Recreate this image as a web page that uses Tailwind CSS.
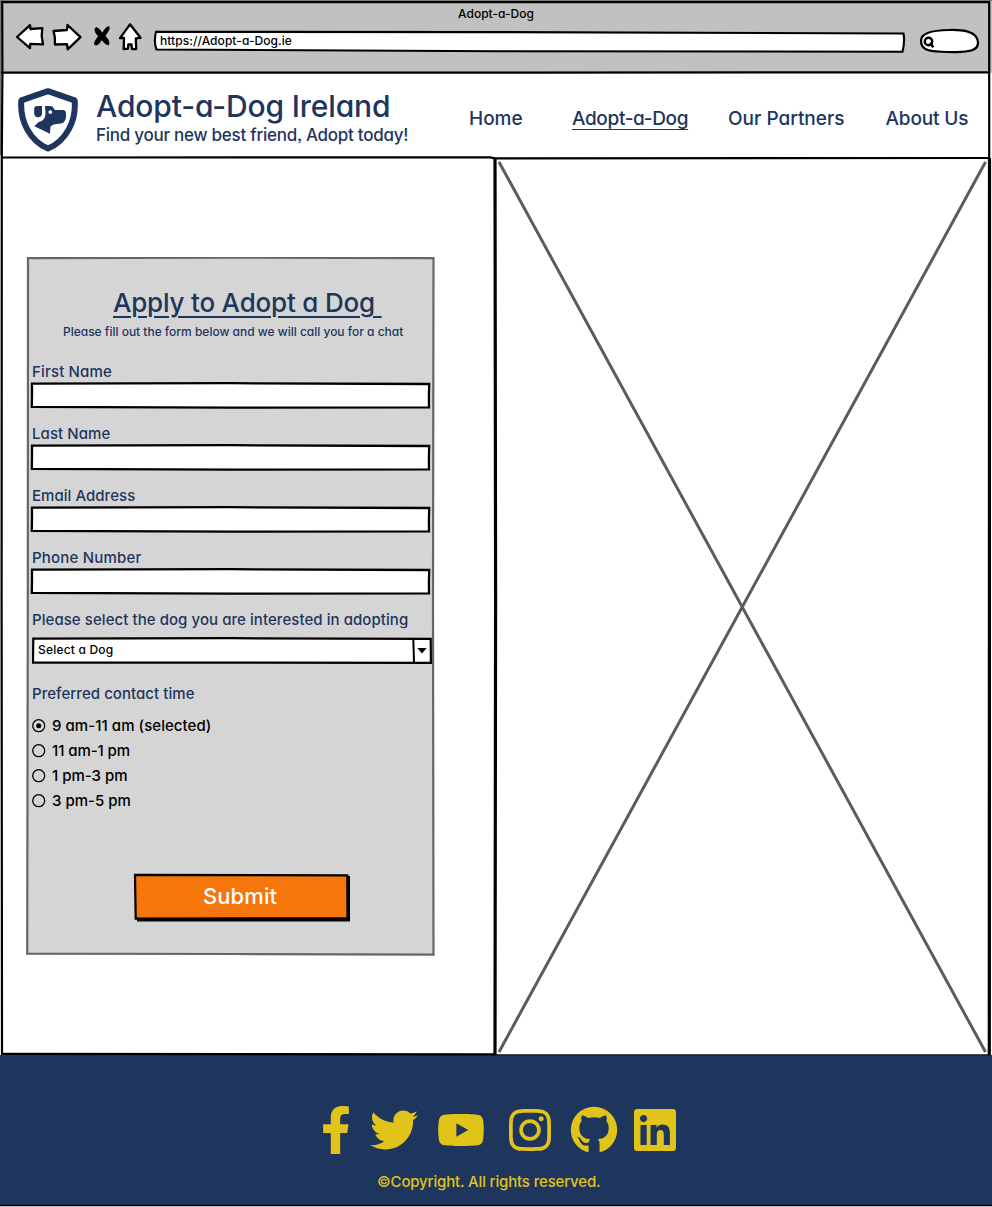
<!DOCTYPE html>
<html lang="en">
<head>
<meta charset="utf-8">
<title>Adopt-a-Dog</title>
<script src="https://cdn.jsdelivr.net/npm/@tailwindcss/browser@4"></script>
</head>
<body class="relative flex h-[1207px] w-[992px] flex-col overflow-hidden bg-white font-['Inter','Liberation_Sans',sans-serif] font-medium text-[#1e355e] [font-feature-settings:'cv11'_1,'ss03'_1] whitespace-nowrap">

<!-- Browser chrome -->
<div class="relative h-[73px] shrink-0 bg-[#c1c1c1] text-black">
  <div class="flex h-[28px] justify-center pl-0 text-[12px] leading-[28px]"><span>Adopt-a-Dog</span></div>
  <div class="flex items-start pl-[14px]">
    <svg class="-mt-[6px] h-[32px] w-[132px] shrink-0" viewBox="14 22 132 32" fill="#fff" stroke="#000" stroke-width="2.3" stroke-linejoin="round">
      <path d="M17 37 30 25.200 30.500 29 42.300 28.200 41.700 36 43 44.300 30.200 43.800 30 48.200Z"/>
      <path d="M53.500 31 67 30 67.500 25 80.500 37.200 67.700 49.300 67 44.200 55 44.500 54.800 37Z"/>
      <path fill="#000" stroke-width="0.800" d="M96 27.500C99 28 101 31 102.300 33.500 103.800 30.500 106 27 109 26.500 110.200 29 107 33 105 36 107.500 38.500 110 41.500 108.500 45 105 44.500 103.500 42 102 39.500 100 42 98.500 45.500 95.500 45 93 44.500 95.500 40 98.500 36 96 34 93.500 29.500 96 27.500Z"/>
      <path d="M130 24.300 120 38.200 124 38 123.700 49.200 128 48.700 128.300 44.500 131.500 44.500 132 49.200 136.200 49 135.800 38.300 140.500 37.800Z"/>
    </svg>
    <div class="relative ml-[7px] mt-[2px] h-[23px] w-[753px]">
      <svg class="absolute inset-0 h-full w-full" viewBox="153 30 753 23"><path d="M156 31.800 500 32.100 903.500 33.500Q905 42 902.500 51.700L500 51.200 156.500 49.500Q153.500 42 156 31.800Z" fill="#fff" stroke="#000" stroke-width="2.100"/></svg>
      <span class="relative block pl-[7px] text-[12px] leading-[22px] tracking-[0.060px]">https://Adopt-a-Dog.ie</span>
    </div>
    <svg class="ml-[12px] h-[26px] w-[62px]" viewBox="918 28 62 26"><path d="M921 41C921 33 931 30.500 949 30 963 29.600 977 31 978 42 979 51 968 51.500 955 52.200 936 51.500 921 53 921 41Z" fill="#fff" stroke="#000" stroke-width="2.200"/><circle cx="928.500" cy="41.500" r="3.700" fill="none" stroke="#000" stroke-width="2.400"/><path d="m930 43 3.300 4.200" stroke="#000" stroke-width="2.600"/></svg>
  </div>
</div>

<!-- Site header -->
<header class="flex h-[85px] shrink-0 items-start pl-[18px]">
  <svg class="mt-[15px] h-[64px] w-[60px] shrink-0" viewBox="18 88 60 64">
    <path d="M48 91.200 74.600 100.300C76.500 121 66 141 48 148.600 30 141 19.500 121 21.400 100.300Z" fill="none" stroke="#1e355e" stroke-width="6" stroke-linejoin="round"/>
    <path fill="#1e355e" d="M36.500 106H42V113.500Q41.800 117.200 38 117.300 34.200 117 34.200 113V108.500Q34.300 106 36.500 106Z"/>
    <path fill="#1e355e" fill-rule="evenodd" d="M45 106H51Q53.500 106.500 54.700 110H63.500Q66 110.500 66 113V117Q65.500 122 62 123.300 60 124 56.500 124 52.500 124.200 50.500 126.500L50 133.700 34.300 126.300 38.700 122Q45.500 120.500 45.500 113.500ZM50.300 110.200A1.900 1.900 0 1 0 50.300 114 1.900 1.900 0 1 0 50.300 110.200Z"/>
  </svg>
  <div class="ml-[18px] w-[373px] shrink-0 pt-[15px]">
    <h1 class="h-[36px] text-[30px] leading-[37px] font-medium tracking-[-0.130px]"><span>Adopt-a-Dog Ireland</span></h1>
    <p class="text-[17px] leading-[22px] tracking-[-0.260px]"><span>Find your new best friend, Adopt today!</span></p>
  </div>
  <nav class="flex pt-[31px] text-[19px] leading-[30px]">
    <a class="w-[103px]"><span>Home</span></a>
    <a class="w-[156px]"><span class="underline decoration-[1px] underline-offset-[4px] tracking-[-0.350px]">Adopt-a-Dog</span></a>
    <a class="w-[157.500px]"><span>Our Partners</span></a>
    <a><span class="tracking-[-0.130px]">About Us</span></a>
  </nav>
</header>

<!-- Form and picture columns -->
<main class="flex h-[897px] shrink-0">
  <section class="w-[495px] shrink-0 pl-[26px] pt-[99px]">
    <form class="relative h-[699px] w-[409px]">
      <svg class="absolute inset-0 h-full w-full" viewBox="26 257 409 699"><path d="M28 258.200 230 257.700 433.500 258.200 433 600 433.500 954.600 230 954 27.200 953.700 27.800 600Z" fill="#d5d5d5" stroke="#666" stroke-width="2.200"/></svg>
      <div class="relative pt-[27px]">
        <h2 class="h-[38px] pl-[87px] text-[26px] leading-[38px] font-medium whitespace-pre tracking-[-0.200px]"><span class="underline decoration-[1.500px] underline-offset-[4px]">Apply to Adopt a Dog </span></h2>
        <p class="h-[20px] pl-[37px] text-[12px] leading-[20px] tracking-[-0.010px]"><span>Please fill out the form below and we will call you for a chat</span></p>
        <div class="pl-[4px] pt-[20px] text-[15px] leading-[20px]">
          <div class="h-[62px]"><label class="block h-[20px] pl-[2px] tracking-[0.160px]"><span>First Name</span></label><svg class="h-[27px] w-[401px]" viewBox="0 0 401 27"><path d="M2 1.700 200 1.200 399.200 2 398.900 14 399 25.300 200 25.700 1.800 24.800 2 13Z" fill="#fff" stroke="#000" stroke-width="2.300"/></svg></div>
          <div class="h-[62px]"><label class="block h-[20px] pl-[2px] tracking-[0.080px]"><span>Last Name</span></label><svg class="h-[27px] w-[401px]" viewBox="0 0 401 27"><path d="M2 1.700 200 1.200 399.200 2 398.900 14 399 25.300 200 25.700 1.800 24.800 2 13Z" fill="#fff" stroke="#000" stroke-width="2.300"/></svg></div>
          <div class="h-[62px]"><label class="block h-[20px] pl-[2px] tracking-[0.040px]"><span>Email Address</span></label><svg class="h-[27px] w-[401px]" viewBox="0 0 401 27"><path d="M2 1.700 200 1.200 399.200 2 398.900 14 399 25.300 200 25.700 1.800 24.800 2 13Z" fill="#fff" stroke="#000" stroke-width="2.300"/></svg></div>
          <div class="h-[62px]"><label class="block h-[20px] pl-[2px] tracking-[0.200px]"><span>Phone Number</span></label><svg class="h-[27px] w-[401px]" viewBox="0 0 401 27"><path d="M2 1.700 200 1.200 399.200 2 398.900 14 399 25.300 200 25.700 1.800 24.800 2 13Z" fill="#fff" stroke="#000" stroke-width="2.300"/></svg></div>
          <div class="h-[74px] pl-[2px]">
            <label class="block h-[27px] tracking-[0.060px]"><span>Please select the dog you are interested in adopting</span></label>
            <div class="relative h-[27px] w-[400px] text-black">
              <svg class="absolute inset-0 h-full w-full" viewBox="32 637 400 27"><path d="M33.300 638.600 230 638.200 430.700 638.900 430.900 662.800 230 662.600 33 662.700Z" fill="#fff" stroke="#000" stroke-width="2.200"/><path d="M413.300 638.500 414 662.500" stroke="#000" stroke-width="2"/><path d="M417.300 648H426.700L422 653.400Z"/></svg>
              <span class="relative block pl-[6px] text-[12px] leading-[26px] tracking-[0.200px]">Select a Dog</span>
            </div>
          </div>
          <p class="h-[29px] pl-[2px] tracking-[0.050px]"><span>Preferred contact time</span></p>
          <div class="flex flex-col pl-[2px] text-black leading-[25px]">
            <label class="flex items-center gap-[6px]"><svg class="h-[14px] w-[14px]" viewBox="0 0 14 14"><circle cx="6.700" cy="6.700" r="6" fill="none" stroke="#000" stroke-width="1.300"/><circle cx="6.700" cy="6.700" r="2.500"/></svg><span class="tracking-[0.050px]">9 am-11 am (selected)</span></label>
            <label class="flex items-center gap-[6px]"><svg class="h-[14px] w-[14px]" viewBox="0 0 14 14"><circle cx="6.700" cy="6.700" r="6" fill="none" stroke="#000" stroke-width="1.300"/></svg><span class="tracking-[-0.080px]">11 am-1 pm</span></label>
            <label class="flex items-center gap-[6px]"><svg class="h-[14px] w-[14px]" viewBox="0 0 14 14"><circle cx="6.700" cy="6.700" r="6" fill="none" stroke="#000" stroke-width="1.300"/></svg><span>1 pm-3 pm</span></label>
            <label class="flex items-center gap-[6px]"><svg class="h-[14px] w-[14px]" viewBox="0 0 14 14"><circle cx="6.700" cy="6.700" r="6" fill="none" stroke="#000" stroke-width="1.300"/></svg><span>3 pm-5 pm</span></label>
          </div>
        </div>
        <button type="button" class="relative ml-[107px] mt-[60px] block h-[49px] w-[218px] text-white">
          <svg class="absolute inset-0 h-full w-full" viewBox="133 873 218 49"><path d="M137 876H350V921.500H137Z"/><path d="M135 874.800 347.300 875.300 347.500 918 135.700 918.700Z" fill="#f6760c" stroke="#000" stroke-width="2.200"/></svg>
          <span class="relative block h-[49px] pr-[4px] text-[22px] leading-[46px] tracking-[0.100px]"><span>Submit</span></span>
        </button>
      </div>
    </form>
  </section>
  <svg class="h-[897px] w-[497px] shrink-0" viewBox="495 158 497 897" fill="none" stroke="#5c5c5c" stroke-width="3"><path d="M499 162 985.500 1052M985.500 162 499 1052"/></svg>
</main>

<!-- Footer -->
<footer class="h-[150px] shrink-0 bg-[#1e355e] pt-[51px] text-[#e1c41a]">
  <div class="flex h-[48px] items-center pl-[321px]" >
    <svg class="h-[48px] w-[30px]" viewBox="0 0 320 512" fill="currentColor"><path d="M279.140 288l14.220-92.660h-88.910v-60.130c0-25.350 12.420-50.060 52.240-50.060h40.420V6.260S260.430 0 225.360 0c-73.220 0-121.080 44.380-121.080 124.720v70.620H22.890V288h81.390v224h100.170V288z"/></svg>
    <svg class="ml-[19px] h-[48px] w-[48px]" viewBox="0 0 512 512" fill="currentColor"><path d="M459.370 151.716c.325 4.548.325 9.097.325 13.645 0 138.720-105.583 298.558-298.558 298.558-59.452 0-114.680-17.219-161.137-47.106 8.447.974 16.568 1.299 25.340 1.299 49.055 0 94.213-16.568 130.274-44.832-46.132-.975-84.792-31.188-98.112-72.772 6.498.974 12.995 1.624 19.818 1.624 9.421 0 18.843-1.300 27.614-3.573-48.081-9.747-84.143-51.980-84.143-102.985v-1.299c13.969 7.797 30.214 12.670 47.431 13.319-28.264-18.843-46.781-51.005-46.781-87.391 0-19.492 5.197-37.360 14.294-52.954 51.655 63.675 129.300 105.258 216.365 109.807-1.624-7.797-2.599-15.918-2.599-24.040 0-57.828 46.782-104.934 104.934-104.934 30.213 0 57.502 12.670 76.670 33.137 23.715-4.548 46.456-13.320 66.599-25.340-7.798 24.366-24.366 44.833-46.132 57.827 21.117-2.273 41.584-8.122 60.426-16.243-14.292 20.791-32.161 39.308-52.628 54.253z"/></svg>
    <svg class="ml-[19px] h-[44px] w-[48px]" viewBox="0 0 576 512" fill="currentColor"><path d="M549.655 124.083c-6.281-23.650-24.787-42.276-48.284-48.597C458.781 64 288 64 288 64S117.220 64 74.629 75.486c-23.497 6.322-42.003 24.947-48.284 48.597-11.412 42.867-11.412 132.305-11.412 132.305s0 89.438 11.412 132.305c6.281 23.650 24.787 41.500 48.284 47.821C117.220 448 288 448 288 448s170.780 0 213.371-11.486c23.497-6.321 42.003-24.171 48.284-47.821 11.412-42.867 11.412-132.305 11.412-132.305s0-89.438-11.412-132.305zm-317.510 213.508V175.185l142.739 81.205-142.739 81.201z"/></svg>
    <svg class="ml-[24px] h-[48px] w-[42px]" viewBox="0 0 448 512" fill="currentColor"><path d="M224.100 141c-63.600 0-114.900 51.300-114.900 114.900s51.300 114.900 114.900 114.900S339 319.500 339 255.900 287.700 141 224.100 141zm0 189.600c-41.100 0-74.700-33.500-74.700-74.700s33.500-74.700 74.700-74.700 74.700 33.500 74.700 74.700-33.600 74.700-74.700 74.700zm146.400-194.300c0 14.900-12 26.800-26.800 26.800-14.900 0-26.800-12-26.800-26.800s12-26.800 26.800-26.800 26.800 12 26.800 26.800zm76.100 27.200c-1.700-35.900-9.900-67.700-36.200-93.900-26.200-26.200-58-34.400-93.900-36.200-37-2.100-147.900-2.100-184.900 0-35.800 1.700-67.600 9.900-93.900 36.100s-34.400 58-36.200 93.900c-2.100 37-2.100 147.900 0 184.900 1.700 35.900 9.900 67.700 36.200 93.900s58 34.400 93.900 36.200c37 2.100 147.900 2.100 184.900 0 35.900-1.700 67.700-9.900 93.900-36.200 26.200-26.200 34.400-58 36.200-93.900 2.100-37 2.100-147.800 0-184.800zM398.800 388c-7.800 19.600-22.900 34.700-42.600 42.600-29.500 11.700-99.500 9-132.100 9s-102.700 2.600-132.100-9c-19.600-7.800-34.700-22.900-42.600-42.600-11.700-29.500-9-99.500-9-132.100s-2.600-102.700 9-132.100c7.800-19.600 22.900-34.700 42.600-42.600 29.500-11.700 99.500-9 132.100-9s102.700-2.600 132.100 9c19.600 7.800 34.700 22.900 42.600 42.600 11.700 29.500 9 99.500 9 132.100s2.700 102.700-9 132.100z"/></svg>
    <svg class="ml-[19px] h-[48px] w-[48px]" viewBox="570 1106 48 48" fill="currentColor"><path d="M588.600 1152.300C578.500 1150 570.800 1141 570.800 1130A23.200 23.200 0 0 1 617.200 1130C617.200 1141 609.500 1150 599.600 1152.300V1144C599.600 1142 599 1140.500 597.800 1139.300 605 1138.500 608.700 1135 608.700 1128 608.700 1125 608 1123 606.300 1121 607 1119 607 1117.500 606 1115.500 604 1115.300 602 1116.300 600 1118 596 1117 592 1117 588 1118 586 1116.300 584 1115.300 582 1115.500 581 1117.500 581 1119 581.700 1121 580 1123 579.300 1125 579.300 1128 579.300 1135 583 1138.500 590.200 1139.300 589.300 1140.200 588.800 1141.200 588.700 1142.500 585 1143.500 583 1142.500 581.500 1140 580 1137.500 578.500 1136.500 577 1136.700 578.500 1138 579 1139 579.800 1141 581.500 1145.500 585 1146 588.600 1145.500Z"/></svg>
    <svg class="ml-[16px] h-[48px] w-[42px]" viewBox="0 0 448 512" fill="currentColor"><path d="M416 32H31.900C14.300 32 0 46.500 0 64.300v383.400C0 465.500 14.300 480 31.900 480H416c17.600 0 32-14.500 32-32.300V64.300c0-17.800-14.400-32.300-32-32.300zM135.400 416H69V202.200h66.500V416zm-33.200-243c-21.300 0-38.500-17.300-38.500-38.500S80.900 96 102.200 96c21.200 0 38.500 17.300 38.500 38.500 0 21.300-17.200 38.500-38.500 38.500zm282.100 243h-66.400V312c0-24.800-.5-56.700-34.500-56.700-34.600 0-39.900 27-39.900 54.900V416h-66.400V202.200h63.700v29.200h.9c8.900-16.800 30.600-34.500 62.200-34.500 66.500 0 78.900 43.800 78.900 100.900V416z"/></svg>
  </div>
  <p class="pl-[377px] pt-[18px] text-[15px] leading-[20px] tracking-[-0.160px]"><span>©Copyright. All rights reserved.</span></p>
</footer>

<!-- Hand-drawn frame lines over the page -->
<svg class="pointer-events-none absolute inset-0 h-[1207px] w-[992px]" viewBox="0 0 992 1207" fill="none" stroke="#000" stroke-width="2.200">
  <path stroke="#777" stroke-width="1" d="M0 .5H992M.5 0V155"/>
  <path d="M1 2.200H990M2.200 1 2.400 72.500 1.800 158 1.600 600 2 1054M1 72.700 500 72.600 990 72.300M1 157.500 490 157.300 495 158.300 990 158M989.200 1V158"/>
  <path stroke-width="3.200" d="M495 158 495.600 600 495 1055M989.500 158 989.300 1055"/>
  <path d="M1 1053.800 495 1054.300"/>
  <path stroke-width="1" d="M495 1054.800H990"/>
  <path stroke-width="1.500" d="M0 1205.500H992"/>
</svg>
</body>
</html>
